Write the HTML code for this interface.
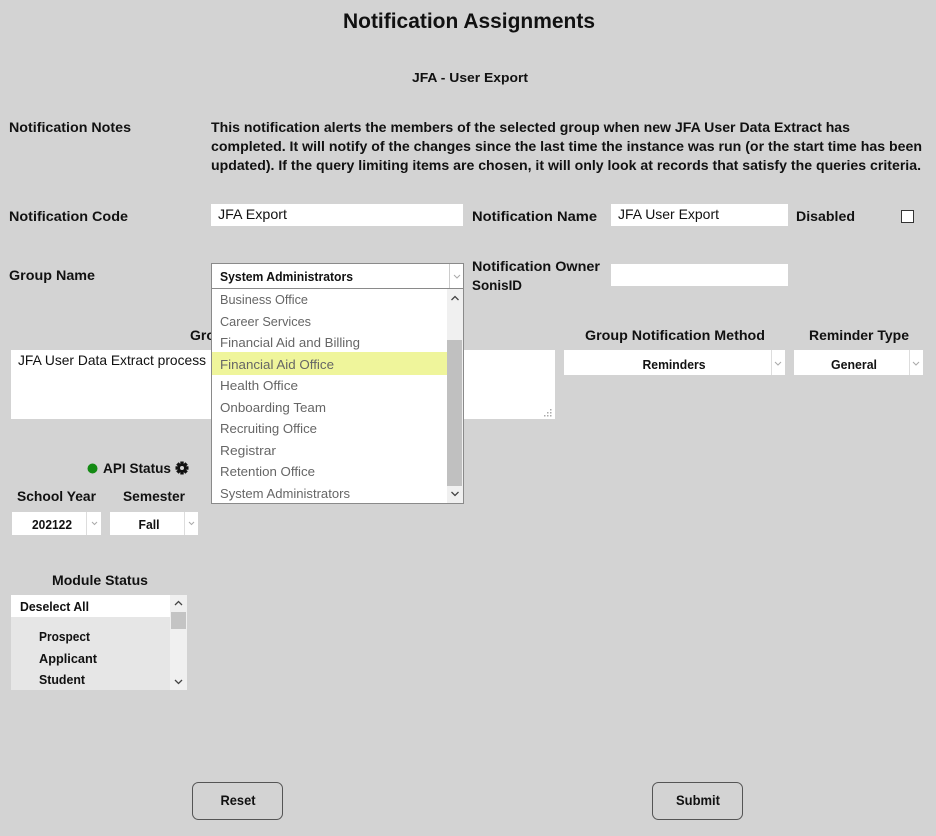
<!DOCTYPE html>
<html><head><meta charset="utf-8"><style>
html,body{margin:0;padding:0;background:#d3d3d3;width:936px;height:836px;overflow:hidden}
svg{display:block}
text{font-family:"Liberation Sans",sans-serif;fill:#111}
.b{font-weight:bold;font-size:14px}
.r{font-size:14px}
.d{font-size:13px;fill:#666}
</style></head><body>
<svg width="936" height="836" viewBox="0 0 936 836" xmlns="http://www.w3.org/2000/svg">
<rect width="936" height="836" fill="#d3d3d3"/>
<text x="343" y="28" class="b" style="font-size:21px" textLength="252" lengthAdjust="spacingAndGlyphs">Notification Assignments</text>
<text x="412" y="82" class="b" style="font-size:13px" textLength="116" lengthAdjust="spacingAndGlyphs">JFA - User Export</text>
<text x="9" y="132" class="b" textLength="122" lengthAdjust="spacingAndGlyphs">Notification Notes</text>
<text x="211" y="132" class="b" textLength="639" lengthAdjust="spacingAndGlyphs">This notification alerts the members of the selected group when new JFA User Data Extract has</text>
<text x="211" y="151" class="b" textLength="711" lengthAdjust="spacingAndGlyphs">completed. It will notify of the changes since the last time the instance was run (or the start time has been</text>
<text x="211" y="170" class="b" textLength="710" lengthAdjust="spacingAndGlyphs">updated). If the query limiting items are chosen, it will only look at records that satisfy the queries criteria.</text>

<text x="9" y="221" class="b" textLength="119" lengthAdjust="spacingAndGlyphs">Notification Code</text>
<rect x="211" y="204" width="252" height="22" fill="#fff"/>
<text x="218" y="219" class="r" textLength="69" lengthAdjust="spacingAndGlyphs">JFA Export</text>
<text x="472" y="221" class="b" textLength="125" lengthAdjust="spacingAndGlyphs">Notification Name</text>
<rect x="611" y="204" width="177" height="22" fill="#fff"/>
<text x="618" y="219" class="r" textLength="101" lengthAdjust="spacingAndGlyphs">JFA User Export</text>
<text x="796" y="221" class="b" textLength="59" lengthAdjust="spacingAndGlyphs">Disabled</text>
<rect x="901.5" y="210.5" width="12" height="12" fill="#fff" stroke="#333" stroke-width="1"/>

<text x="9" y="280" class="b" textLength="86" lengthAdjust="spacingAndGlyphs">Group Name</text>
<text x="472" y="271" class="b" textLength="128" lengthAdjust="spacingAndGlyphs">Notification Owner</text>
<text x="472" y="290" class="b" textLength="50" lengthAdjust="spacingAndGlyphs">SonisID</text>
<rect x="611" y="264" width="177" height="22" fill="#fff"/>

<text x="190" y="340" class="b">Gro</text>
<rect x="11" y="350" width="544" height="69" fill="#fff"/>
<text x="18" y="365" class="r" textLength="188" lengthAdjust="spacingAndGlyphs">JFA User Data Extract process</text>
<g fill="#aaa"><rect x="550" y="409" width="1.5" height="1.5"/><rect x="547" y="412" width="1.5" height="1.5"/><rect x="550" y="412" width="1.5" height="1.5"/><rect x="544" y="415" width="1.5" height="1.5"/><rect x="547" y="415" width="1.5" height="1.5"/><rect x="550" y="415" width="1.5" height="1.5"/></g>

<text x="585" y="340" class="b" textLength="180" lengthAdjust="spacingAndGlyphs">Group Notification Method</text>
<text x="809" y="340" class="b" textLength="100" lengthAdjust="spacingAndGlyphs">Reminder Type</text>
<rect x="564" y="350" width="221" height="25" fill="#fff"/>
<line x1="771.5" y1="350" x2="771.5" y2="375" stroke="#ddd"/>
<path d="M775 362l3 3 3-3" fill="none" stroke="#aaa"/>
<text x="674" y="369" class="b" style="font-size:13px" text-anchor="middle" textLength="63" lengthAdjust="spacingAndGlyphs">Reminders</text>
<rect x="794" y="350" width="129" height="25" fill="#fff"/>
<line x1="909.5" y1="350" x2="909.5" y2="375" stroke="#ddd"/>
<path d="M913 362l3 3 3-3" fill="none" stroke="#aaa"/>
<text x="854" y="369" class="b" style="font-size:13px" text-anchor="middle" textLength="46" lengthAdjust="spacingAndGlyphs">General</text>

<circle cx="92.5" cy="468.5" r="5" fill="#138a13"/>
<text x="103" y="473" class="b" textLength="68" lengthAdjust="spacingAndGlyphs">API Status</text>
<g transform="translate(182,468)" fill="#111">
<circle r="4.5"/>
<g><rect x="-1.7" y="-6.5" width="3.4" height="13"/><rect x="-1.7" y="-6.5" width="3.4" height="13" transform="rotate(45)"/><rect x="-1.7" y="-6.5" width="3.4" height="13" transform="rotate(90)"/><rect x="-1.7" y="-6.5" width="3.4" height="13" transform="rotate(135)"/></g>
<circle r="2" fill="#d3d3d3"/>
</g>

<text x="17" y="501" class="b" textLength="79" lengthAdjust="spacingAndGlyphs">School Year</text>
<text x="123" y="501" class="b" textLength="62" lengthAdjust="spacingAndGlyphs">Semester</text>
<rect x="12" y="512" width="89" height="23" fill="#fff"/>
<line x1="86.5" y1="512" x2="86.5" y2="535" stroke="#ddd"/>
<path d="M92 522l2.5 2.5 2.5-2.5" fill="none" stroke="#aaa"/>
<text x="52" y="529" class="b" style="font-size:13px" text-anchor="middle" textLength="40" lengthAdjust="spacingAndGlyphs">202122</text>
<rect x="110" y="512" width="88" height="23" fill="#fff"/>
<line x1="184.5" y1="512" x2="184.5" y2="535" stroke="#ddd"/>
<path d="M189 522l2.5 2.5 2.5-2.5" fill="none" stroke="#aaa"/>
<text x="149" y="529" class="b" style="font-size:13px" text-anchor="middle" textLength="21" lengthAdjust="spacingAndGlyphs">Fall</text>

<text x="52" y="585" class="b" textLength="96" lengthAdjust="spacingAndGlyphs">Module Status</text>
<rect x="11" y="595" width="176" height="95" fill="#e6e6e6"/>
<rect x="11" y="595" width="159" height="22" fill="#fff"/>
<rect x="170" y="595" width="17" height="95" fill="#f0f0f0"/>
<rect x="171" y="612" width="15" height="17" fill="#c4c4c4"/>
<path d="M175 605l3.5-3.5 3.5 3.5M175 680l3.5 3.5 3.5-3.5" fill="none" stroke="#444" stroke-width="1.3"/>
<text x="20" y="611" class="b" style="font-size:13px" textLength="69" lengthAdjust="spacingAndGlyphs">Deselect All</text>
<text x="39" y="641" class="b" style="font-size:13px" textLength="51" lengthAdjust="spacingAndGlyphs">Prospect</text>
<text x="39" y="663" class="b" style="font-size:13px" textLength="58" lengthAdjust="spacingAndGlyphs">Applicant</text>
<text x="39" y="684" class="b" style="font-size:13px" textLength="46" lengthAdjust="spacingAndGlyphs">Student</text>

<!-- group select + dropdown -->
<rect x="211.5" y="263.5" width="252" height="240" fill="#fff" stroke="#8a8a8a"/>
<line x1="211" y1="288.5" x2="463" y2="288.5" stroke="#8a8a8a"/>
<line x1="449.5" y1="264" x2="449.5" y2="288" stroke="#ccc"/>
<path d="M454 275l3 3 3-3" fill="none" stroke="#aaa"/>
<text x="220" y="281" class="b" style="font-size:13px" textLength="133" lengthAdjust="spacingAndGlyphs">System Administrators</text>
<rect x="447" y="289" width="16" height="214" fill="#f0f0f0"/>
<rect x="447" y="340" width="15" height="146" fill="#c0c0c0"/>
<path d="M451.5 300l3.5-3.5 3.5 3.5M451.5 492l3.5 3.5 3.5-3.5" fill="none" stroke="#444" stroke-width="1.3"/>
<rect x="212" y="352" width="235" height="23" fill="#eff59b"/>
<text x="220" y="304" class="d" textLength="88" lengthAdjust="spacingAndGlyphs">Business Office</text>
<text x="220" y="326" class="d" textLength="91" lengthAdjust="spacingAndGlyphs">Career Services</text>
<text x="220" y="347" class="d" textLength="140" lengthAdjust="spacingAndGlyphs">Financial Aid and Billing</text>
<text x="220" y="369" class="d" textLength="114" lengthAdjust="spacingAndGlyphs">Financial Aid Office</text>
<text x="220" y="390" class="d" textLength="78" lengthAdjust="spacingAndGlyphs">Health Office</text>
<text x="220" y="412" class="d" textLength="106" lengthAdjust="spacingAndGlyphs">Onboarding Team</text>
<text x="220" y="433" class="d" textLength="97" lengthAdjust="spacingAndGlyphs">Recruiting Office</text>
<text x="220" y="455" class="d" textLength="56" lengthAdjust="spacingAndGlyphs">Registrar</text>
<text x="220" y="476" class="d" textLength="95" lengthAdjust="spacingAndGlyphs">Retention Office</text>
<text x="220" y="498" class="d" textLength="130" lengthAdjust="spacingAndGlyphs">System Administrators</text>

<rect x="192.5" y="782.5" width="90" height="37" rx="6" fill="none" stroke="#555"/>
<text x="238" y="805" class="b" style="font-size:14px" text-anchor="middle" textLength="35" lengthAdjust="spacingAndGlyphs">Reset</text>
<rect x="652.5" y="782.5" width="90" height="37" rx="6" fill="none" stroke="#555"/>
<text x="698" y="805" class="b" style="font-size:14px" text-anchor="middle" textLength="44" lengthAdjust="spacingAndGlyphs">Submit</text>
</svg>
</body></html>
